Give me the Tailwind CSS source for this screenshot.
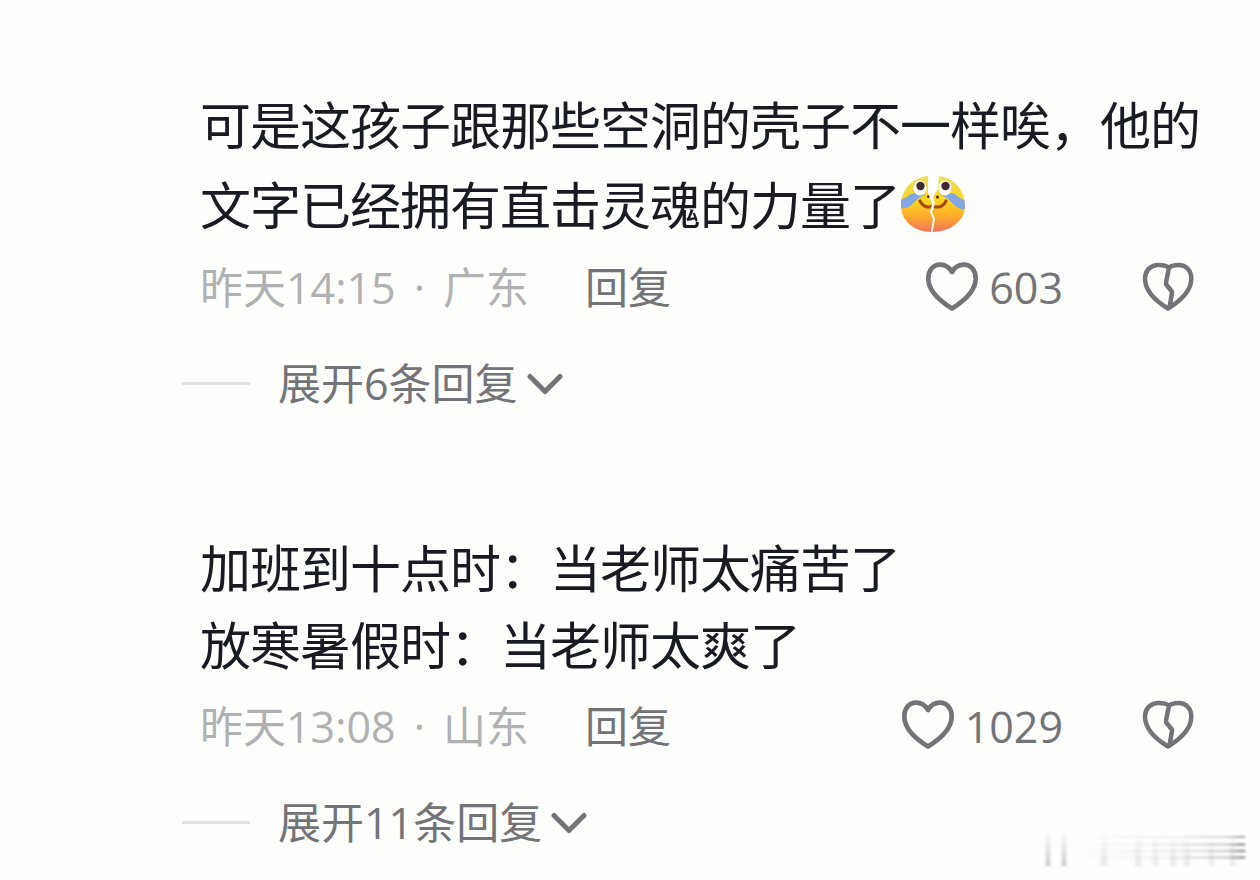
<!DOCTYPE html>
<html lang="zh-CN">
<head>
<meta charset="utf-8">
<title>评论</title>
<script src="https://cdn.jsdelivr.net/npm/@tailwindcss/browser@4"></script>
</head>
<body class="relative w-[1260px] h-[880px] overflow-hidden bg-[#fefefd] text-[#737478] font-['Open_Sans','Noto_Sans_CJK_SC',sans-serif] whitespace-nowrap">
<svg class="hidden">
  <defs>
    <symbol id="heart" viewBox="0 0 54 50"><path d="M27 10C24.500 5.500 20 2.700 15 2.700C8 2.700 3.300 8.500 3.300 16.500C3.300 28 12.500 37.500 27 46.500C41.500 37.500 50.700 28 50.700 16.500C50.700 8.500 46 2.700 39 2.700C34 2.700 29.500 5.500 27 10Z" fill="none" stroke="currentColor" stroke-width="4.700" stroke-linejoin="round"/></symbol>
    <symbol id="broken" viewBox="0 0 54 50"><path d="M28 5.500C25 3.500 20.500 2.800 16.500 3C9 3.500 4 9 4 16.500C4 28 13 38 27 46.500C41 38 50.300 28 50.300 16.500C50.300 8.500 45 3 37.500 3C34 3 30.500 3.800 28 5.500L25 20.500Q24.700 22 26 23.500L30.500 29Q31.300 30 31 31L28.500 45.500" fill="none" stroke="currentColor" stroke-width="4.500" stroke-linejoin="round" stroke-linecap="round"/></symbol>
    <symbol id="chevron" viewBox="0 0 36 22"><path d="M3 3.500L18 18.500L33 3.500" fill="none" stroke="currentColor" stroke-width="5" stroke-linejoin="round" stroke-linecap="round"/></symbol>
  </defs>
</svg>
<main class="flex flex-col pt-[83px]">
  <article class="flex flex-col h-[443px]">
    <div class="pl-[200px] text-[51px] tracking-[-1px] leading-[80px] text-[#191b23] font-['Noto_Sans_CJK_SC',sans-serif]">
      <p class="h-[80px]">可是这孩子跟那些空洞的壳子不一样唉，他的</p>
      <p class="h-[80px] flex items-center">文字已经拥有直击灵魂的力量了<svg class="w-[66px] h-[60px] mt-[2px]" viewBox="0 0 66 60">
          <defs>
            <linearGradient id="face" x1="0" y1="0" x2="0" y2="1"><stop offset="0" stop-color="#f0dc62"/><stop offset=".45" stop-color="#fbd51f"/><stop offset=".72" stop-color="#fba92b"/><stop offset="1" stop-color="#ef6b68"/></linearGradient>
            <clipPath id="halves"><path d="M28 2C13 3 1 15 1 32C1 47 15 58 31 58L33 45L30 38L32 30L28 19Z"/><path d="M39 2C54 4 65 16 65 32C65 47 50 58 32.500 58L35 45L32 38L35 30L33 23L38 15Z"/></clipPath>
          </defs>
          <g clip-path="url(#halves)">
            <path d="M0 0H66V60H0Z" fill="url(#face)"/>
            <path d="M0 25C5 26 9 20 14 19L26 21C20 22 17 26 13 29.500C9 34 4 35 0 34Z" fill="#82a7e2"/>
            <path d="M66 26C61 27 57 20 52 19L40 21C45 22 50 26 53 30C57 34 62 36 66 35Z" fill="#82a7e2"/>
            <ellipse cx="20" cy="14" rx="6.500" ry="7.500" fill="#fff"/><ellipse cx="45" cy="14" rx="6.500" ry="7.500" fill="#fff"/>
            <circle cx="20.500" cy="12" r="4.200" fill="#3f2930"/><circle cx="45.500" cy="12" r="4.200" fill="#3f2930"/>
            <circle cx="28.500" cy="22.500" r="1.600" fill="#5b3720"/><circle cx="37.500" cy="23" r="1.600" fill="#5b3720"/>
            <path d="M20 27C22 32 27 34 32 32.500M34 32.500C39 34 44 32 46 27" fill="none" stroke="#a94a12" stroke-width="3.200" stroke-linecap="round"/>
          </g>
        </svg></p>
    </div>
    <div class="mt-[13px] h-[64px] pl-[200px] pr-[65px] flex items-center text-[43px]">
      <div class="w-[385px] flex text-[#b0b1b2]"><span>昨天14:15</span><span class="mx-[18px]">·</span><span>广东</span></div>
      <span>回复</span>
      <div class="ml-auto flex items-center">
        <svg class="w-[54px] h-[50px] mr-[10px] -mt-[2px]"><use href="#heart"/></svg>
        <span>603</span>
        <svg class="w-[54px] h-[50px] ml-[78px] -mt-[2px]"><use href="#broken"/></svg>
      </div>
    </div>
    <div class="mt-[32px] h-[64px] pl-[182px] flex items-center text-[43px]">
      <i class="w-[68px] h-[3px] bg-[#e2e2e2] mr-[28px] -mt-[2px]"></i>
      <span>展开6条回复</span>
      <svg class="w-[36px] h-[22px] ml-[9px]"><use href="#chevron"/></svg>
    </div>
  </article>
  <article class="flex flex-col">
    <div class="pl-[200px] text-[51px] tracking-[-1px] leading-[80px] text-[#191b23] font-['Noto_Sans_CJK_SC',sans-serif]">
      <p class="h-[77px]">加班到十点时：当老师太痛苦了</p>
      <p class="h-[80px]">放寒暑假时：当老师太爽了</p>
    </div>
    <div class="mt-[12px] h-[64px] pl-[200px] pr-[65px] flex items-center text-[43px]">
      <div class="w-[385px] flex text-[#b0b1b2]"><span>昨天13:08</span><span class="mx-[18px]">·</span><span>山东</span></div>
      <span>回复</span>
      <div class="ml-auto flex items-center">
        <svg class="w-[54px] h-[50px] mr-[10px] -mt-[4px]"><use href="#heart"/></svg>
        <span>1029</span>
        <svg class="w-[54px] h-[50px] ml-[78px] -mt-[4px]"><use href="#broken"/></svg>
      </div>
    </div>
    <div class="mt-[32px] h-[64px] pl-[182px] flex items-center text-[43px]">
      <i class="w-[68px] h-[3px] bg-[#e2e2e2] mr-[28px] -mt-[2px]"></i>
      <span>展开11条回复</span>
      <svg class="w-[36px] h-[22px] ml-[9px]"><use href="#chevron"/></svg>
    </div>
  </article>
</main>
<!-- faded watermark streaks -->
<svg class="absolute left-[1035px] top-[820px] w-[225px] h-[56px]" viewBox="0 0 225 56">
  <defs>
    <linearGradient id="across"><stop offset="0" stop-color="#777" stop-opacity="0"/><stop offset=".6" stop-color="#777" stop-opacity=".1"/><stop offset=".9" stop-color="#777" stop-opacity=".3"/><stop offset="1" stop-color="#666" stop-opacity=".65"/></linearGradient>
    <linearGradient id="down" x1="0" y1="0" x2="0" y2="1"><stop offset="0" stop-color="#777" stop-opacity="0"/><stop offset="1" stop-color="#777" stop-opacity=".42"/></linearGradient>
    <filter id="soft" x="-10%" y="-20%" width="120%" height="140%"><feGaussianBlur stdDeviation="1.500 .9"/></filter>
  </defs>
  <g filter="url(#soft)">
    <path d="M11 10H15V46H11ZM27 10H31V46H27Z" fill="url(#down)"/>
    <path d="M66 14H72V46H66ZM100 14H106V46H100ZM118 14H123V46H118ZM135 14H141V46H135ZM149 14H155V46H149ZM174 14H179V46H174ZM195 14H200V46H195Z" fill="url(#down)" opacity=".4"/>
    <path d="M35 16H210V18H35ZM35 23H210V26H35ZM35 29.500H210V32.500H35ZM35 36H210V39H35Z" fill="url(#across)"/>
  </g>
</svg>
</body>
</html>
